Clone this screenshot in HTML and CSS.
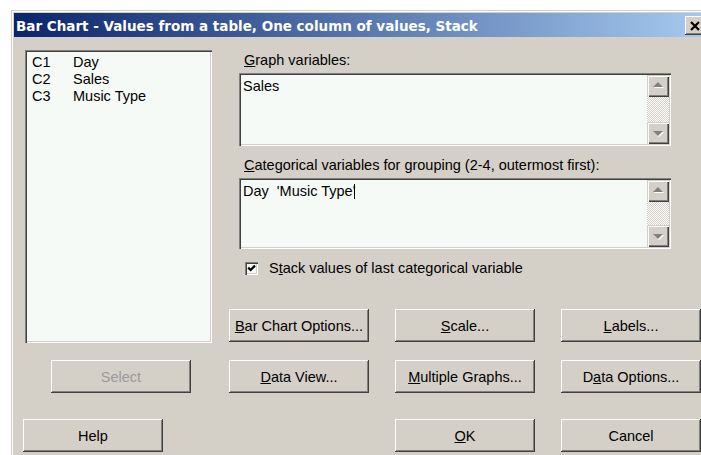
FILE: index.html
```html
<!DOCTYPE html>
<html lang="en">
<head>
<meta charset="utf-8">
<title>Bar Chart - Values from a table, One column of values, Stack</title>
<link rel="stylesheet" href="styles.css">
</head>
<body>
<div class="dialog">
  <div class="titlebar">
    <span class="title">Bar Chart - Values from a table, One column of values, Stack</span>
    <span class="close" aria-label="Close">
      <svg width="11" height="10" viewBox="0 0 11 10">
        <path d="M1 1 L9 9 M9 1 L1 9" stroke="#000" stroke-width="2.2" fill="none"/>
      </svg>
    </span>
  </div>

  <div class="client">
    <div class="left">
      <div class="listbox">
        <div class="lrow"><span class="cid">C1</span><span>Day</span></div>
        <div class="lrow"><span class="cid">C2</span><span>Sales</span></div>
        <div class="lrow"><span class="cid">C3</span><span>Music Type</span></div>
      </div>
      <div class="btn select">Select</div>
      <div class="btn help">Help</div>
    </div>

    <div class="right">
      <div class="lbl"><u>G</u>raph variables:</div>
      <div class="field graph">
        <div class="field-text">Sales</div>
        <div class="vscroll">
          <div class="sbtn">
            <svg width="22" height="22" viewBox="0 0 22 22"><path d="M7 13 L12 8 L17 13 Z" fill="#fff"/><path d="M6 12 L11 7 L16 12 Z" fill="#808080"/></svg>
          </div>
          <div class="track"></div>
          <div class="sbtn">
            <svg width="22" height="22" viewBox="0 0 22 22"><path d="M7 10 L17 10 L12 15 Z" fill="#fff"/><path d="M6 9 L16 9 L11 14 Z" fill="#808080"/></svg>
          </div>
        </div>
      </div>

      <div class="lbl lbl-cat"><u>C</u>ategorical variables for grouping (2-4, outermost first):</div>
      <div class="field cat">
        <div class="field-text">Day  'Music Type'<span class="caret"></span></div>
        <div class="vscroll">
          <div class="sbtn">
            <svg width="22" height="22" viewBox="0 0 22 22"><path d="M7 13 L12 8 L17 13 Z" fill="#fff"/><path d="M6 12 L11 7 L16 12 Z" fill="#808080"/></svg>
          </div>
          <div class="track"></div>
          <div class="sbtn">
            <svg width="22" height="22" viewBox="0 0 22 22"><path d="M7 10 L17 10 L12 15 Z" fill="#fff"/><path d="M6 9 L16 9 L11 14 Z" fill="#808080"/></svg>
          </div>
        </div>
      </div>

      <div class="check-row">
        <span class="checkbox">
          <svg width="13" height="13" viewBox="0 0 13 13"><path d="M3.2 5.6 L5.6 8 L10 3.6" stroke="#000" stroke-width="2.2" fill="none"/></svg>
        </span>
        <span>S<u>t</u>ack values of last categorical variable</span>
      </div>

      <div class="btn-grid">
        <div class="btn"><span><u>B</u>ar Chart Options...</span></div>
        <div class="btn"><span><u>S</u>cale...</span></div>
        <div class="btn"><span><u>L</u>abels...</span></div>
        <div class="btn"><span><u>D</u>ata View...</span></div>
        <div class="btn"><span><u>M</u>ultiple Graphs...</span></div>
        <div class="btn"><span>D<u>a</u>ta Options...</span></div>
        <div class="spacer last"></div>
        <div class="btn last"><span><u>O</u>K</span></div>
        <div class="btn last"><span>Cancel</span></div>
      </div>
    </div>
  </div>
</div>
</body>
</html>
```

FILE: styles.css
```css
html, body {
  margin: 0;
  height: 100%;
  overflow: hidden;
  background: #fff;
}

body {
  font-family: "Liberation Sans", Arial, sans-serif;
  font-size: 14.5px;
  color: #000;
}

/* window frame */
.dialog {
  margin: 10px 0 0 11px;
  width: 700px;
  height: 470px;
  box-sizing: border-box;
  padding: 3px;
  background: #d4d0c8;
  box-shadow: inset 1px 1px #d4d0c8, inset 2px 2px #fff;
}

.titlebar {
  height: 24px;
  display: flex;
  justify-content: space-between;
  align-items: flex-start;
  background: linear-gradient(to right, #0a246a, #a6caf0);
}

.title {
  font-family: "DejaVu Sans", Verdana, sans-serif;
  font-weight: bold;
  font-size: 13.5px;
  line-height: 24px;
  padding: 1px 0 0 2px;
  color: #fff;
  white-space: nowrap;
}

.close {
  width: 21px;
  height: 19px;
  margin: 3px 2px 0 0;
  display: flex;
  align-items: center;
  justify-content: center;
  background: #d4d0c8;
  box-shadow: inset -1px -1px #404040, inset 1px 1px #fff, inset -2px -2px #808080;
}

.client {
  display: flex;
}

/* left column: column list and its buttons */
.left {
  width: 215px;
  flex: none;
}

.listbox {
  margin: 13px 0 0 11px;
  width: 187px;
  height: 293px;
  box-sizing: border-box;
  padding: 4px 0 0 7px;
  background: #f6faf6;
  box-shadow: inset 1px 1px #808080, inset 2px 2px #404040, inset -1px -1px #fff, inset -2px -2px #d4d0c8;
}

.lrow {
  display: flex;
  line-height: 17px;
}

.cid {
  width: 41px;
}

.btn {
  width: 140px;
  height: 33px;
  box-sizing: border-box;
  display: flex;
  align-items: center;
  justify-content: center;
  background: #d4d0c8;
  white-space: nowrap;
  box-shadow: inset -1px -1px #404040, inset 1px 1px #fff, inset -2px -2px #808080;
}

.select {
  margin: 17px 0 0 37px;
  color: #9a9a9a;
}

.help {
  margin: 26px 0 0 9px;
}

/* right column */
.right {
  width: 480px;
  flex: none;
}

.lbl {
  line-height: 16px;
  margin: 15px 0 0 15px;
  white-space: nowrap;
}

.lbl-cat {
  margin-top: 11px;
}

.field {
  margin: 5px 0 0 10px;
  width: 432px;
  height: 73px;
  box-sizing: border-box;
  padding: 2px;
  display: flex;
  background: #f6faf6;
  box-shadow: inset 1px 1px #808080, inset 2px 2px #404040, inset -1px -1px #fff, inset -2px -2px #d4d0c8;
}

.field.cat {
  height: 71px;
}

.field-text {
  flex: 1;
  padding: 3px 0 0 2px;
  line-height: 16px;
  white-space: pre;
}

.caret {
  display: inline-block;
  width: 1px;
  height: 15px;
  margin-left: -1px;
  vertical-align: -3px;
  background: #000;
}

.vscroll {
  width: 22px;
  flex: none;
  display: flex;
  flex-direction: column;
}

.sbtn {
  height: 22px;
  flex: none;
  background: #d4d0c8;
  box-shadow: inset 1px 1px #d4d0c8, inset 2px 2px #fff, inset -1px -1px #404040, inset -2px -2px #808080;
}

.sbtn svg {
  display: block;
}

.track {
  flex: 1;
  background: repeating-conic-gradient(#d4d0c8 0 25%, #fff 0 50%) 0 0 / 2px 2px;
}

.check-row {
  display: flex;
  align-items: center;
  gap: 11px;
  height: 16px;
  margin: 11px 0 0 16px;
}

.checkbox {
  width: 13px;
  height: 13px;
  flex: none;
  background: #f6faf6;
  box-shadow: inset 1px 1px #808080, inset 2px 2px #404040, inset -1px -1px #fff, inset -2px -2px #d4d0c8;
}

.checkbox svg {
  display: block;
}

.btn-grid {
  display: grid;
  grid-template-columns: repeat(3, 140px);
  column-gap: 26px;
  row-gap: 18px;
  margin-top: 33px;
}

.btn-grid .last {
  margin-top: 8px;
}
```
